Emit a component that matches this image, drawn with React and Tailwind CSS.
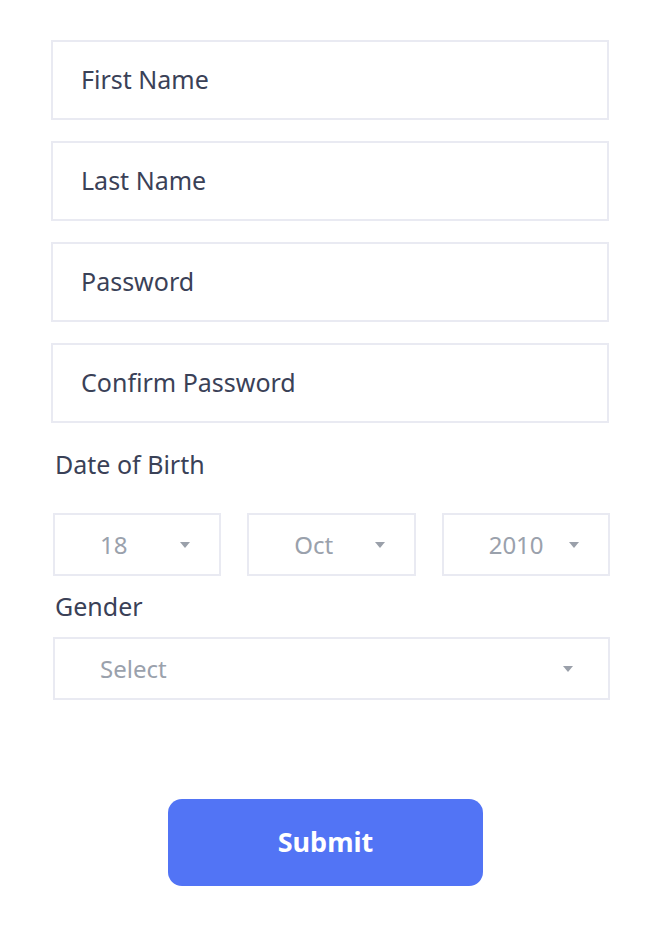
function Caret() {
  return (
    <svg width="10" height="6" viewBox="0 0 10 6" className="shrink-0">
      <path d="M0 0 H10 L5 6 Z" fill="#9aa0aa" />
    </svg>
  );
}

function TextField({ label }) {
  return (
    <div className="h-[80px] border-2 border-[#e9eaf2] bg-white flex items-center pl-[28px]">
      <span className="text-[25px] text-[#3a4157]">{label}</span>
    </div>
  );
}

function SelectBox({ value, wide }) {
  return (
    <div
      className={
        wide
          ? 'h-[63px] border-2 border-[#e9eaf2] bg-white flex items-center justify-between pl-[45px] pr-[35px]'
          : 'h-[63px] border-2 border-[#e9eaf2] bg-white flex items-center justify-between pl-[45px] pr-[29px]'
      }
    >
      <span className="text-[24px] text-[#9aa1ac]">{value}</span>
      <Caret />
    </div>
  );
}

export default function App() {
  return (
    <div className="min-h-[934px] bg-white pt-[40px] pl-[51px] w-[660px]" style={{ fontFamily: '"Noto Sans", "Liberation Sans", sans-serif' }}>
      <div className="w-[558px] flex flex-col gap-[21px]">
        <TextField label="First Name" />
        <TextField label="Last Name" />
        <TextField label="Password" />
        <TextField label="Confirm Password" />
      </div>

      <div className="ml-[2px] w-[557px]">
        <p className="mt-[25px] pl-[2px] text-[25px] leading-[32px] text-[#3a4157]">Date of Birth</p>
        <div className="mt-[33px] grid grid-cols-3 gap-[26px]">
          <SelectBox value="18" />
          <SelectBox value="Oct" />
          <SelectBox value="2010" />
        </div>

        <p className="mt-[14px] pl-[2px] text-[25px] leading-[32px] text-[#3a4157]">Gender</p>
        <div className="mt-[15px]">
          <SelectBox value="Select" wide />
        </div>
      </div>

      <div className="mt-[99px] ml-[117px]">
        <button className="w-[315px] h-[87px] rounded-[14px] bg-[#5274f5] text-white text-[27px] font-bold">
          Submit
        </button>
      </div>
    </div>
  );
}
